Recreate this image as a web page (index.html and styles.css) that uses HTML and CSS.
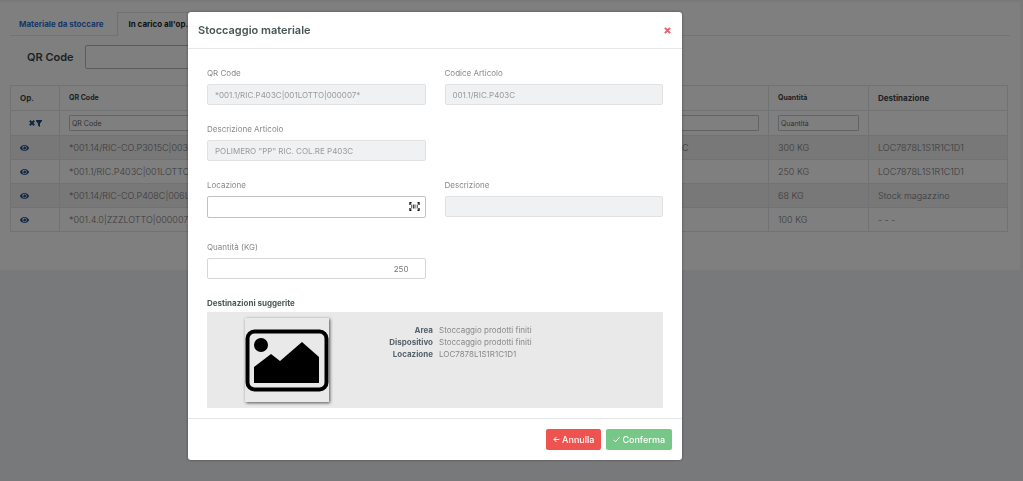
FILE: index.html
```html
<!DOCTYPE html>
<html lang="it">
<head>
<meta charset="utf-8">
<meta name="viewport" content="width=device-width, initial-scale=1">
<title>Stoccaggio materiale</title>
<link rel="stylesheet" href="styles.css">
</head>
<body>
<svg width="0" height="0" class="sprite" aria-hidden="true">
  <symbol id="eye" viewBox="0 0 576 512"><path fill="currentColor" d="M572 241C518 135 410 64 288 64S58 135 4 241a32 32 0 0 0 0 30c54 106 162 177 284 177s230-71 284-177a32 32 0 0 0 0-30zM288 400a144 144 0 1 1 0-288 144 144 0 0 1 0 288zm0-240a95 95 0 0 0-25 4 48 48 0 0 1-67 67 96 96 0 1 0 92-71z"/></symbol>
  <symbol id="times" viewBox="0 0 12 12"><path stroke="currentColor" stroke-width="3.6" d="M1.5 1.5l9 9M10.500 1.500l-9 9"/></symbol>
</svg>
<main class="page">
  <section class="card">
    <nav class="tabs">
      <a class="tab" href="#stoccare">Materiale da stoccare</a>
      <a class="tab active" href="#carico">In carico all'op.</a>
    </nav>
    <div class="search">
      <label for="search-qr">QR Code</label>
      <input id="search-qr" type="text">
    </div>
    <table class="grid">
      <colgroup><col class="c-op"><col class="c-qr"><col class="c-art"><col class="c-qty"><col class="c-dest"></colgroup>
      <thead>
        <tr><th class="large">Op.</th><th>QR Code</th><th>Articolo</th><th>Quantità</th><th class="large">Destinazione</th></tr>
        <tr>
          <td><button class="clear" type="button" aria-label="Rimuovi filtri"><svg width="6" height="6"><use href="#times"/></svg><svg width="6" height="7" viewBox="0 0 12 14"><path fill="currentColor" d="M0 0h12v2L8 7v7l-4-3V7L0 2z"/></svg></button></td>
          <td><input type="text" placeholder="QR Code" aria-label="QR Code"></td>
          <td><input type="text" placeholder="Articolo" aria-label="Articolo"></td>
          <td><input type="text" placeholder="Quantità" aria-label="Quantità"></td>
          <td></td>
        </tr>
      </thead>
      <tbody>
        <tr><td><svg class="eye"><use href="#eye"/></svg></td><td>*001.14/RIC-CO.P3015C|003LOTTO|000007*</td><td>POLIMERO "PP" RIC. COL.RE P3015C</td><td>300 KG</td><td>LOC7878L1S1R1C1D1</td></tr>
        <tr><td><svg class="eye"><use href="#eye"/></svg></td><td>*001.1/RIC.P403C|001LOTTO|000007*</td><td>POLIMERO "PP" RIC. P403C</td><td>250 KG</td><td>LOC7878L1S1R1C1D1</td></tr>
        <tr><td><svg class="eye"><use href="#eye"/></svg></td><td>*001.14/RIC-CO.P408C|006LOTTO|000007*</td><td>POLIMERO "PP" RIC. P408C</td><td>68 KG</td><td>Stock magazzino</td></tr>
        <tr><td><svg class="eye"><use href="#eye"/></svg></td><td>*001.4.0|ZZZLOTTO|000007*</td><td>POLIMERO</td><td>100 KG</td><td>- - -</td></tr>
      </tbody>
    </table>
  </section>
</main>

<div class="backdrop">
  <form class="modal" role="dialog" aria-labelledby="modal-title">
    <header class="modal-head">
      <h1 id="modal-title">Stoccaggio materiale</h1>
      <button class="close" type="button" aria-label="Chiudi"><svg width="7" height="7"><use href="#times"/></svg></button>
    </header>
    <div class="modal-body">
      <div class="row">
        <div class="field"><label for="qr">QR Code</label><input id="qr" type="text" value="*001.1/RIC.P403C|001LOTTO|000007*" disabled></div>
        <div class="field"><label for="code">Codice Articolo</label><input id="code" type="text" value="001.1/RIC.P403C" disabled></div>
      </div>
      <div class="row">
        <div class="field"><label for="art">Descrizione Articolo</label><input id="art" type="text" value="POLIMERO &quot;PP&quot; RIC. COL.RE P403C" disabled></div>
      </div>
      <div class="row spaced">
        <div class="field"><label for="loc">Locazione</label>
          <div class="scan"><input id="loc" type="text"><button type="button" aria-label="Scansiona"><svg width="11" height="9" viewBox="0 0 22 18" fill="none" stroke="currentColor" stroke-width="2.6"><path d="M5 1.500H2V6M2 12v4.500h3M17 1.500h3V6M20 12v4.500h-3"/><path stroke-width="1.600" d="M5.500 5v8M9 5v8M12 5v8M16.500 5v8"/></svg></button></div>
        </div>
        <div class="field"><label for="desc">Descrizione</label><input id="desc" type="text" disabled></div>
      </div>
      <div class="row">
        <div class="field"><label for="qty">Quantità (KG)</label><input id="qty" class="number" type="text" inputmode="numeric" value="250"></div>
      </div>
      <h2>Destinazioni suggerite</h2>
      <div class="suggest">
        <div class="thumb"><svg viewBox="0 0 84 84" role="img" aria-label="Immagine"><rect x="2.500" y="13.500" width="79" height="58" rx="7" fill="none" stroke="#000" stroke-width="4"/><circle cx="16" cy="27" r="7" fill="#000"/><path d="M9 65V49l17-13 9 7 22-19 17 15v26z"/></svg></div>
        <dl class="info">
          <dt>Area</dt><dd>Stoccaggio prodotti finiti</dd>
          <dt>Dispositivo</dt><dd>Stoccaggio prodotti finiti</dd>
          <dt>Locazione</dt><dd>LOC7878L1S1R1C1D1</dd>
        </dl>
      </div>
    </div>
    <footer class="modal-foot">
      <button class="btn cancel" type="button"><svg viewBox="0 0 14 14"><path d="M13 7H2M7 2L2 7l5 5"/></svg>Annulla</button>
      <button class="btn confirm" type="submit"><svg viewBox="0 0 14 14"><path d="M1 7.500l4 4 8-9"/></svg>Conferma</button>
    </footer>
  </form>
</div>
</body>
</html>
```
FILE: styles.css
```css
* { box-sizing: border-box; }
body {
  margin: 0;
  background: #f1f2f5;
  color: #3c4448;
  font-family: Inter, "Open Sans", sans-serif;
  font-size: 9px;
  line-height: 14px;
}
input, button { font: inherit; color: inherit; margin: 0; }
svg { display: block; }
.sprite { position: absolute; }

.page { padding: 2px 3px 0 0; }
.card { background: #fff; padding: 10px 10px 38px 10px; }
.tabs { display: flex; border-bottom: 1px solid #e4e6e8; }
.tab {
  padding: 4px 10px;
  border: 1px solid transparent;
  border-bottom: 0;
  color: #2f6fd0;
  font-size: 8px;
  font-weight: 700;
  text-decoration: none;
}
.tab:first-child { padding-left: 8px; padding-right: 13px; }
.tab.active { margin-bottom: -1px; border-color: #dee2e6; background: #fff; color: #222; }
.search { display: flex; align-items: center; gap: 11px; padding: 9px 17px 16px; }
.search label { font-size: 11px; font-weight: 600; }
.search input {
  width: 240px;
  height: 24px;
  border: 1px solid #b5b9bd;
  border-radius: 2px;
}

.table-wrap { padding-right: 2px; }
.grid { width: calc(100% - 2px); border-collapse: collapse; table-layout: fixed; }
.grid th, .grid td { height: 24px; padding: 0 9px; border: 1px solid #e2e4e6; text-align: left; white-space: nowrap; }
.grid thead tr > * { height: 25px; }
.grid th { font-size: 7px; font-weight: 700; }
.grid th.large { font-size: 8px; }
.grid tbody { color: #777; font-weight: 300; }
.grid tbody tr:nth-child(odd) { background: #f0f0f0; }
.grid input {
  display: block;
  width: 100%;
  height: 16px;
  padding: 0 2px;
  border: 1px solid #c4c7ca;
  border-radius: 1px;
  background: transparent;
  font-size: 7px;
}
.grid input::placeholder { color: #666; }
.c-op { width: 49px; }
.c-art { width: 246px; }
.c-qty { width: 100px; }
.c-dest { width: 139px; }
.clear { display: flex; gap: 1px; margin: 0 auto; padding: 0; border: 0; background: none; color: #174a86; }
.eye { width: 9px; height: 8px; color: #174a86; }

.backdrop { position: fixed; inset: 0; overflow: auto; padding: 12px 12px 12px 188px; background: rgba(0, 0, 0, .5); }
.modal { max-width: 494px; border-radius: 3px; background: #fff; box-shadow: 0 0 3px rgba(0, 0, 0, .4); }
.modal-head {
  display: flex;
  align-items: center;
  justify-content: space-between;
  padding: 10px;
  border-bottom: 1px solid #e5e8ea;
}
.modal-head h1 { margin: 0; font-size: 11px; line-height: 16px; font-weight: 600; color: #465554; }
.close { padding: 1px; border: 0; background: none; color: #e8636b; }
.modal-body { padding: 17px 19px 10px; }
.row { display: grid; grid-template-columns: 1fr 1fr; gap: 19px; margin-bottom: 17px; }
.row.spaced { margin-bottom: 22px; }
.field label { display: block; margin-bottom: 4px; font-size: 8px; color: #888; }
.field input {
  display: block;
  width: 100%;
  height: 21px;
  padding: 0 7px;
  border: 1px solid #d4d7d9;
  border-radius: 2px;
  background: #fff;
  color: #777;
  font-size: 8px;
}
.field input:disabled { border-color: #dfe1e3; background: #f0f1f2; color: #999; }
.field input.number { padding-right: 16px; text-align: right; }
.scan { position: relative; }
.field .scan input { height: 22px; border-color: #bfc2c5; }
.scan button { position: absolute; right: 6px; top: 6px; padding: 0; border: 0; background: none; color: #111; }
.modal-body h2 { margin: 0 0 2px; font-size: 8px; line-height: 14px; font-weight: 700; color: #4b5a59; }
.suggest { display: flex; padding: 6px 38px; background: #e9e9e9; }
.thumb { width: 84px; height: 84px; box-shadow: 1px 1px 3px rgba(0, 0, 0, .65); }
.info {
  display: grid;
  grid-template-columns: 104px 1fr;
  align-content: start;
  column-gap: 6px;
  margin: 6px 0 0;
  font-size: 8px;
  line-height: 12px;
}
.info dt { text-align: right; font-weight: 700; color: #56626a; }
.info dd { margin: 0; color: #888; }
.modal-foot { display: flex; justify-content: flex-end; gap: 5px; padding: 10px; border-top: 1px solid #e5e8ea; }
.btn {
  display: flex;
  align-items: center;
  gap: 2px;
  height: 21px;
  padding: 0 7px;
  border: 0;
  border-radius: 2px;
  color: #fff;
  font-size: 9px;
  font-weight: 500;
}
.btn svg { width: 7px; height: 7px; fill: none; stroke: currentColor; stroke-width: 2; }
.cancel { background: #ef5350; }
.confirm { background: #76c788; }
```
